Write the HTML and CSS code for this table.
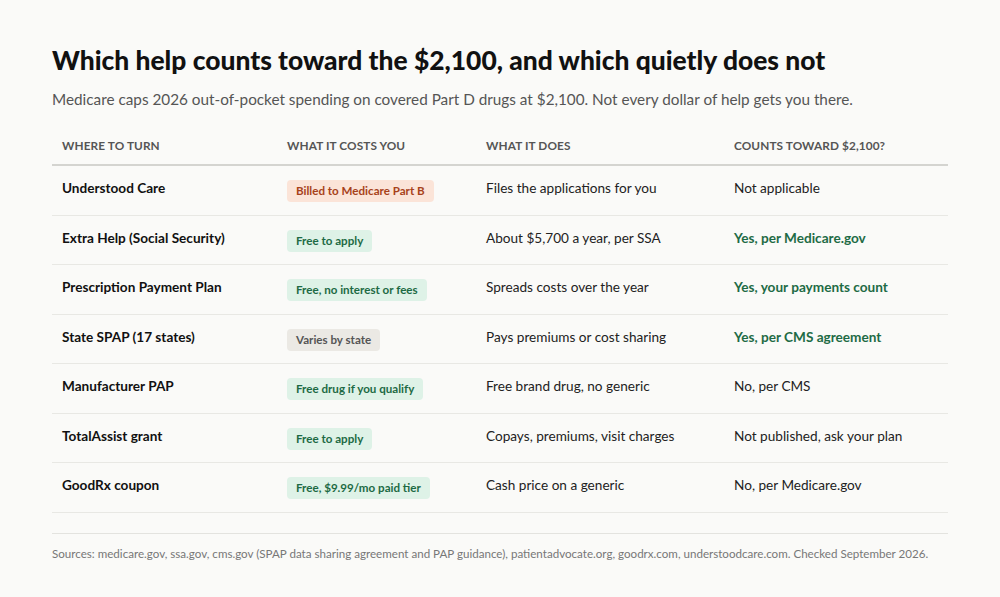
FILE: index.html
```html
<!DOCTYPE html>
<html>
<head>
<meta charset="utf-8">
<link rel="stylesheet" href="styles.css">
</head>
<body>
<main class="page">
  <h1 class="title">Which help counts toward the $2,100, and which quietly does not</h1>
  <p class="subtitle">Medicare caps 2026 out-of-pocket spending on covered Part D drugs at $2,100. Not every dollar of help gets you there.</p>
  <table class="tbl">
    <colgroup>
      <col class="c1"><col class="c2"><col class="c3"><col class="c4">
    </colgroup>
    <thead>
      <tr><th>Where to turn</th><th>What it costs you</th><th>What it does</th><th>Counts toward $2,100?</th></tr>
    </thead>
    <tbody>
      <tr><td class="name">Understood Care</td><td><span class="badge orange">Billed to Medicare Part B</span></td><td>Files the applications for you</td><td>Not applicable</td></tr>
      <tr><td class="name">Extra Help (Social Security)</td><td><span class="badge green">Free to apply</span></td><td>About $5,700 a year, per SSA</td><td class="yes">Yes, per Medicare.gov</td></tr>
      <tr><td class="name">Prescription Payment Plan</td><td><span class="badge green">Free, no interest or fees</span></td><td>Spreads costs over the year</td><td class="yes">Yes, your payments count</td></tr>
      <tr><td class="name">State SPAP (17 states)</td><td><span class="badge gray">Varies by state</span></td><td>Pays premiums or cost sharing</td><td class="yes">Yes, per CMS agreement</td></tr>
      <tr><td class="name">Manufacturer PAP</td><td><span class="badge green">Free drug if you qualify</span></td><td>Free brand drug, no generic</td><td>No, per CMS</td></tr>
      <tr><td class="name">TotalAssist grant</td><td><span class="badge green">Free to apply</span></td><td>Copays, premiums, visit charges</td><td>Not published, ask your plan</td></tr>
      <tr><td class="name">GoodRx coupon</td><td><span class="badge green">Free, $9.99/mo paid tier</span></td><td>Cash price on a generic</td><td>No, per Medicare.gov</td></tr>
    </tbody>
  </table>
  <p class="sources">Sources: medicare.gov, ssa.gov, cms.gov (SPAP data sharing agreement and PAP guidance), patientadvocate.org, goodrx.com, understoodcare.com. Checked September 2026.</p>
</main>
</body>
</html>
```
FILE: styles.css
```css
html, body {
  margin: 0;
  padding: 0;
  background: #fafaf8;
}
body {
  font-family: Lato, "Noto Sans", sans-serif;
  color: #1a1a1a;
}
.page {
  width: 896px;
  margin: 0 auto;
  padding-top: 42px;
}
.title {
  margin: 0;
  font-size: 26.4px;
  font-weight: 900;
  line-height: 36px;
  color: #111;
}
.subtitle {
  margin: 10px 0 0;
  font-size: 15.3px;
  line-height: 22px;
  color: #555;
}
.tbl {
  margin-top: 14px;
  width: 100%;
  border-collapse: collapse;
  table-layout: fixed;
}
.c1 { width: 225px; }
.c2 { width: 199px; }
.c3 { width: 248px; }
.c4 { width: 224px; }
th {
  text-align: left;
  font-size: 11.8px;
  font-weight: 700;
  text-transform: uppercase;
  letter-spacing: 0.1px;
  color: #555;
  padding: 12px 10px 9px;
  height: 19px;
  border-bottom: 2px solid #d4d4d0;
}
td {
  font-size: 13.6px;
  color: #222;
  padding: 0 10px 4px;
  height: 44.5px;
  border-bottom: 1px solid #e8e8e4;
  vertical-align: middle;
}
td.name {
  font-weight: 700;
  color: #111;
}
td.yes {
  font-weight: 700;
  color: #1e6b45;
}
.badge {
  display: inline-block;
  font-size: 11.6px;
  font-weight: 700;
  line-height: 16px;
  padding: 3px 9px;
  border-radius: 4px;
  position: relative;
  top: 3px;
}
.badge.orange { background: #fbe4d8; color: #a7421a; }
.badge.green { background: #def2e7; color: #1d6a44; }
.badge.gray { background: #ebe9e4; color: #555; }
.sources {
  margin: 20px 0 0;
  border-top: 1px solid #e3e3df;
  padding-top: 12px;
  font-size: 11.6px;
  line-height: 16px;
  color: #777;
  white-space: nowrap;
}
```
